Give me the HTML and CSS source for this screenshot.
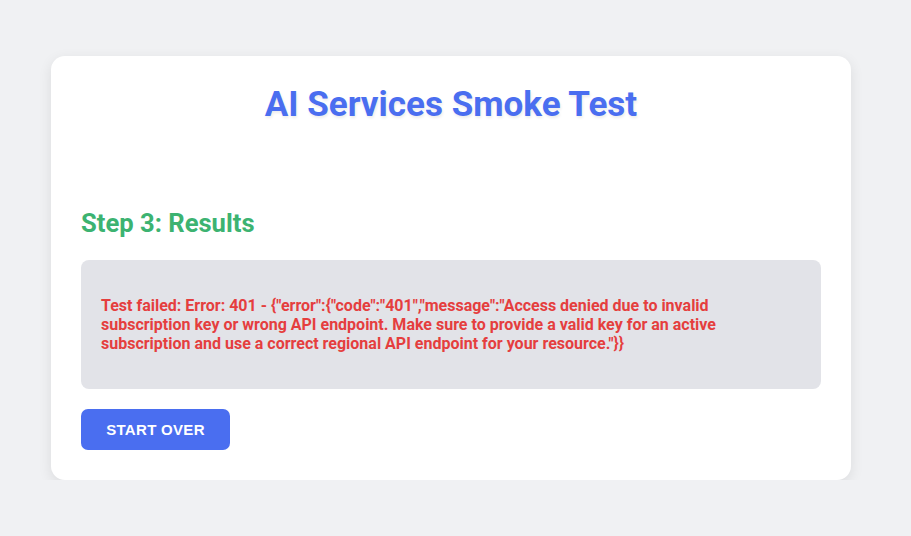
FILE: index.html
```html
<!DOCTYPE html>
<html lang="en">
<head>
<meta charset="utf-8">
<title>AI Services Smoke Test</title>
<link rel="stylesheet" href="styles.css">
</head>
<body>
<div class="card">
  <h1 class="title">AI Services Smoke Test</h1>
  <section class="step">
    <h2 class="step-title">Step 3: Results</h2>
    <div class="result">
      <p class="error">Test failed: Error: 401 - {"error":{"code":"401","message":"Access denied due to invalid subscription key or wrong API endpoint. Make sure to provide a valid key for an active subscription and use a correct regional API endpoint for your resource."}}</p>
    </div>
    <button class="btn">Start Over</button>
  </section>
</div>
</body>
</html>
```

FILE: styles.css
```css
html, body {
  margin: 0;
  padding: 0;
}
body {
  background: #f0f1f3;
  font-family: Roboto, "Noto Sans", Arial, sans-serif;
  padding-top: 56px;
  padding-left: 51px;
}
.card {
  width: 800px;
  box-sizing: border-box;
  background: #ffffff;
  border-radius: 14px;
  padding: 30px;
  box-shadow: 0 4px 14px rgba(0, 0, 0, 0.09);
}
.title {
  margin: 0;
  text-align: center;
  font-size: 35px;
  font-weight: 700;
  line-height: 38px;
  color: #4a6ef0;
  text-shadow: 1px 2px 3px rgba(0, 0, 0, 0.08);
}
.step {
  margin-top: 85px;
}
.step-title {
  margin: 0 0 23px 0;
  font-size: 25.6px;
  font-weight: 700;
  line-height: 28px;
  color: #3cb371;
}
.result {
  background: #e2e3e8;
  border-radius: 8px;
  padding: 36px 20px;
}
.error {
  margin: 0;
  color: #e53e3e;
  font-size: 16px;
  font-weight: 700;
  line-height: 19px;
}
.btn {
  margin-top: 20px;
  display: block;
  width: 149px;
  height: 41px;
  border: none;
  border-radius: 7px;
  background: #4a6ef0;
  color: #ffffff;
  font-family: "Liberation Sans", Arial, sans-serif;
  font-size: 15px;
  font-weight: 700;
  text-transform: uppercase;
  letter-spacing: 0.3px;
  cursor: pointer;
}
```
